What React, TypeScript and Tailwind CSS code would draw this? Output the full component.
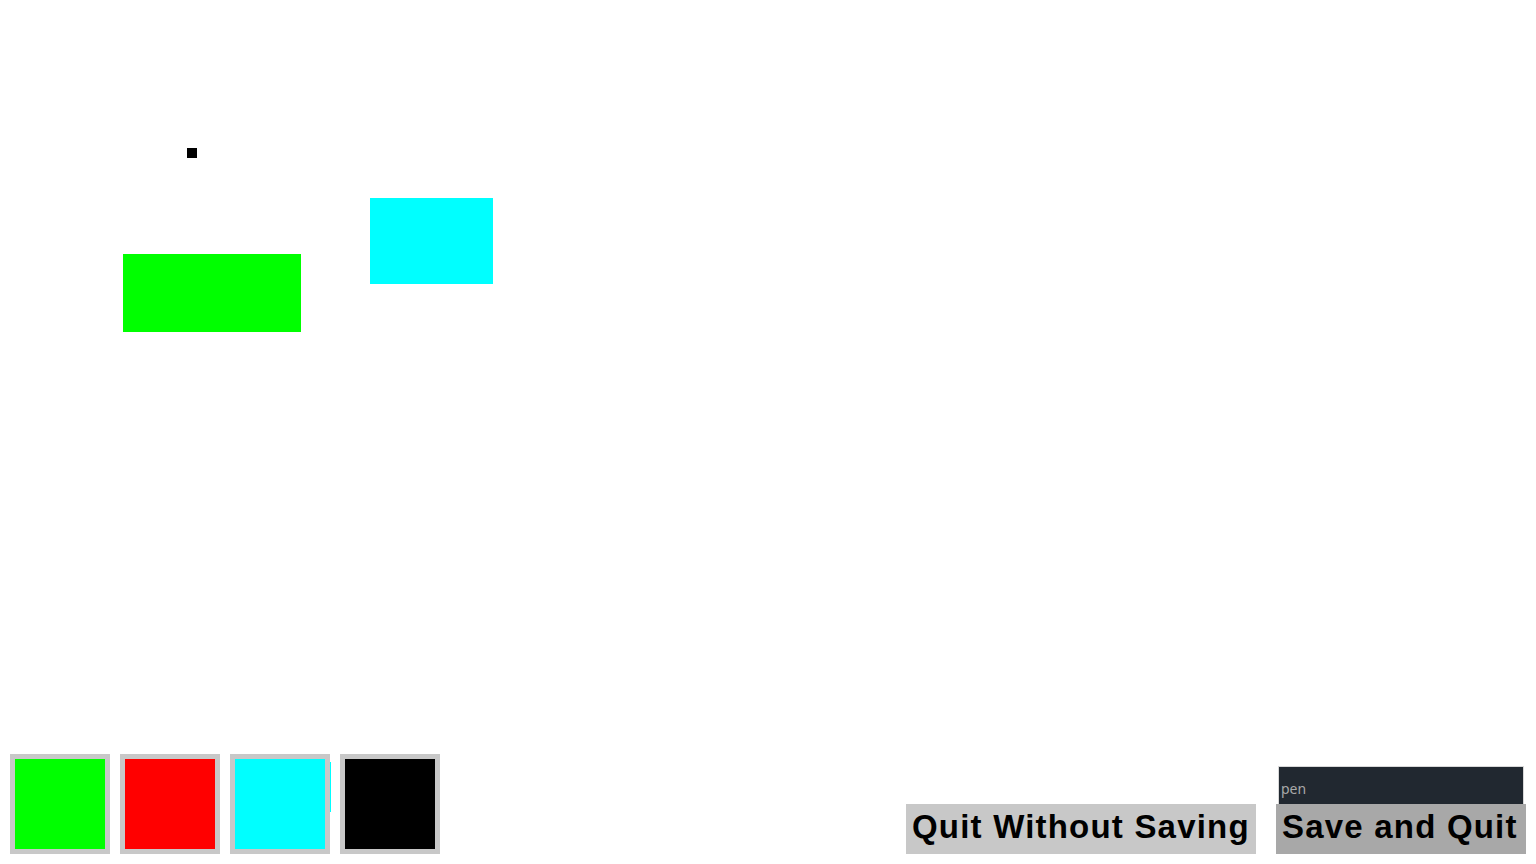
const SWATCHES = ["#00ff00", "#ff0000", "#00ffff", "#000000"];

export default function App() {
  return (
    <div className="flex h-[864px] w-[1536px] flex-col overflow-hidden bg-white">
      {/* drawing canvas */}
      <div className="relative flex-1">
        <div className="absolute left-[187px] top-[148px] h-[10px] w-[10px] bg-black" />
        <div className="absolute left-[370px] top-[198px] h-[86px] w-[123px] bg-[#00ffff]" />
        <div className="absolute left-[123px] top-[254px] h-[78px] w-[178px] bg-[#00ff00]" />
      </div>

      <div className="flex items-end justify-between px-[10px] pb-[10px]">
        <div className="relative flex gap-[10px]">
          {SWATCHES.map((c) => (
            <button
              key={c}
              className="h-[100px] w-[100px] border-[5px] border-[#c8c8c8]"
              style={{ backgroundColor: c }}
            />
          ))}
          <div className="absolute left-[320px] top-[8px] h-[50px] w-[1px] bg-[#00ffff]" />
        </div>

        <div className="flex items-end gap-[20px]">
          <button className="h-[50px] w-[350px] bg-[#c8c8c8] pb-[4px] pl-[6px] text-left font-['Liberation_Sans',Arial,sans-serif] text-[33px] font-bold leading-[46px] tracking-[1.2px] text-black">
            Quit Without Saving
          </button>
          <div className="flex w-[250px] flex-col">
            <input
              placeholder="pen"
              className="mx-[2px] h-[38px] border border-b-0 border-[#d8d8d8] bg-[#212830] px-[2px] pt-[6px] font-['Noto_Sans',sans-serif] text-[14px] text-[#aaaaaa] outline-none placeholder:text-[#a8a8a8]"
            />
            <button className="h-[50px] bg-[#a8a8a8] pb-[4px] pl-[6px] text-left font-['Liberation_Sans',Arial,sans-serif] text-[33px] font-bold leading-[46px] tracking-[1.2px] text-black">
              Save and Quit
            </button>
          </div>
        </div>
      </div>
    </div>
  );
}
